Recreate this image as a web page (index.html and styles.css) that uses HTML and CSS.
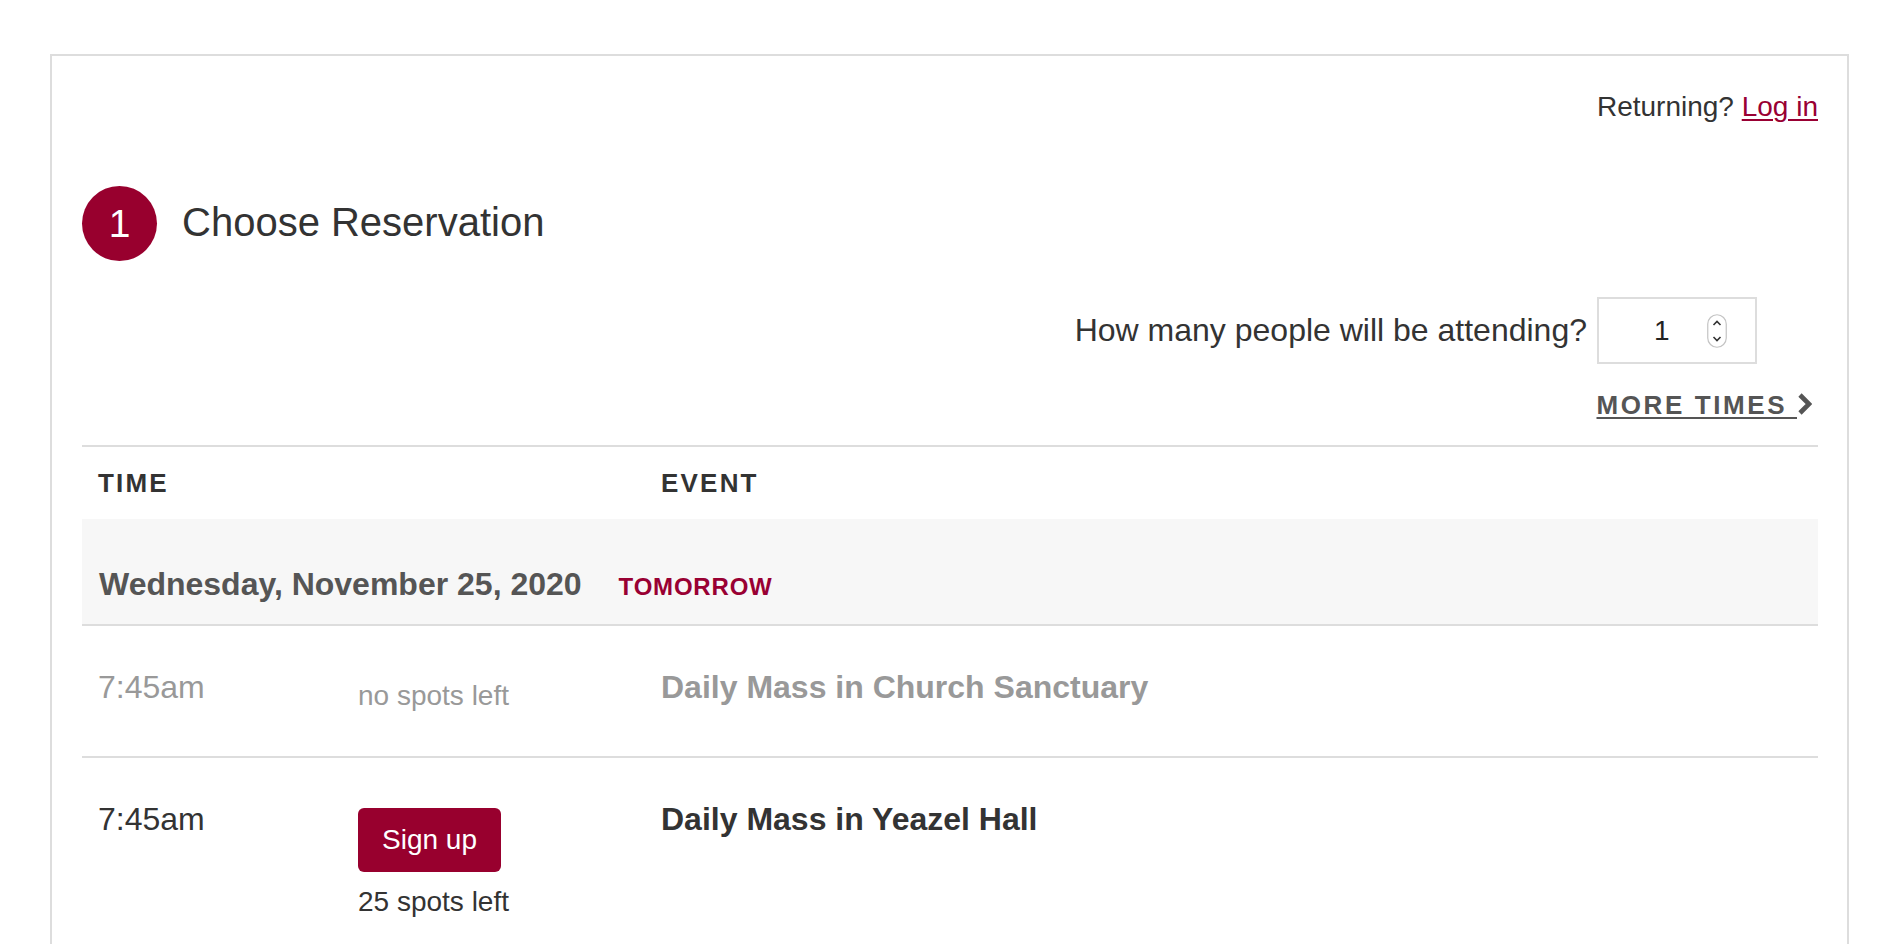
FILE: index.html
```html
<!DOCTYPE html>
<html lang="en">
<head>
<meta charset="utf-8">
<title>Choose Reservation</title>
<link rel="stylesheet" href="styles.css">
</head>
<body>
<div class="page">
  <div class="card">
    <div class="returning">Returning? <a href="#" class="login">Log in</a></div>

    <div class="step">
      <span class="step-num">1</span>
      <h2 class="step-title">Choose Reservation</h2>
    </div>

    <div class="attend">
      <label class="attend-label">How many people will be attending?</label>
      <div class="qty">
        <span class="qty-value">1</span>
        <svg class="spinner" width="20" height="34" viewBox="0 0 20 34">
          <rect x="0.75" y="0.75" width="18.5" height="32.5" rx="9.25" ry="9.25" fill="#fff" stroke="#c4c4c4" stroke-width="1.2"/>
          <polyline points="6.5,11 10,7.5 13.5,11" fill="none" stroke="#333" stroke-width="1.6"/>
          <polyline points="6.5,23 10,26.5 13.5,23" fill="none" stroke="#333" stroke-width="1.6"/>
        </svg>
      </div>
    </div>

    <div class="more">
      <a href="#" class="more-link">MORE TIMES </a><svg class="chev" width="15" height="22" viewBox="0 0 15 22"><polyline points="3,2 12,11 3,20" fill="none" stroke="#555" stroke-width="4.6"/></svg>
    </div>

    <div class="table">
      <div class="thead">
        <div class="th">TIME</div>
        <div class="th"></div>
        <div class="th">EVENT</div>
      </div>

      <div class="date-row">
        <span class="date">Wednesday, November 25, 2020</span>
        <span class="tomorrow">TOMORROW</span>
      </div>

      <div class="row row-disabled">
        <div class="time">7:45am</div>
        <div class="spots-cell">
          <div class="spots">no spots left</div>
        </div>
        <div class="title">Daily Mass in Church Sanctuary</div>
      </div>

      <div class="row">
        <div class="time">7:45am</div>
        <div class="spots-cell">
          <button class="signup" type="button">Sign up</button>
          <div class="spots spots-after">25 spots left</div>
        </div>
        <div class="title">Daily Mass in Yeazel Hall</div>
      </div>
    </div>
  </div>
</div>
</body>
</html>
```

FILE: styles.css
```css
html, body {
  margin: 0;
  padding: 0;
  background: #fff;
  overflow: hidden;
}

body {
  font-family: "Liberation Sans", Arial, Helvetica, sans-serif;
  color: #333;
}

.page {
  padding: 54px 51px 0 50px;
}

.card {
  border: 2px solid #ddd;
  padding: 31px 29px 40px 30px;
}

.returning {
  text-align: right;
  font-size: 28px;
  line-height: 40px;
  color: #333;
}

.login {
  color: #990033;
  text-decoration: underline;
  text-underline-offset: 3px;
  text-decoration-thickness: 2px;
}

.step {
  margin-top: 59px;
  display: flex;
  align-items: center;
  gap: 25px;
}

.step-num {
  width: 75px;
  height: 75px;
  border-radius: 50%;
  background: #98002e;
  color: #fff;
  font-size: 39px;
  line-height: 75px;
  text-align: center;
  flex: none;
}

.step-title {
  margin: 0 0 3px 0;
  font-size: 40px;
  line-height: 46px;
  font-weight: normal;
  color: #333;
}

.attend {
  margin-top: 36px;
  display: flex;
  justify-content: flex-end;
  align-items: center;
  gap: 10px;
  padding-right: 61px;
}

.attend-label {
  font-size: 32px;
  line-height: 45px;
  color: #333;
}

.qty {
  box-sizing: border-box;
  width: 160px;
  height: 67px;
  border: 2px solid #ddd;
  display: flex;
  align-items: center;
  padding: 0 28px 0 55px;
}

.qty-value {
  font-size: 28px;
  line-height: 40px;
  color: #222;
}

.spinner {
  margin-left: auto;
  display: block;
}

.more {
  margin-top: 21px;
  display: flex;
  justify-content: flex-end;
  align-items: center;
  padding-right: 6px;
  line-height: 40px;
}

.more-link {
  font-size: 26px;
  font-weight: bold;
  letter-spacing: 2.6px;
  color: #555;
  text-decoration: underline;
  text-decoration-thickness: 2px;
  text-underline-offset: 3px;
  white-space: pre;
}

.chev {
  display: block;
  margin-top: -2px;
}

.table {
  margin-top: 20px;
  border-top: 2px solid #ddd;
}

.thead,
.row {
  display: grid;
  grid-template-columns: 260px 303px 1fr;
  padding-left: 16px;
}

.thead {
  padding-top: 16px;
  padding-bottom: 16px;
}

.th {
  font-size: 26px;
  line-height: 40px;
  font-weight: bold;
  letter-spacing: 2.2px;
  color: #333;
}

.date-row {
  background: #f7f7f7;
  border-bottom: 2px solid #ddd;
  padding: 43px 16px 17px 17px;
  display: flex;
  align-items: baseline;
}

.date {
  font-size: 32px;
  line-height: 45px;
  font-weight: bold;
  color: #555;
}

.tomorrow {
  margin-left: 37px;
  font-size: 24px;
  font-weight: bold;
  letter-spacing: 0.8px;
  color: #990033;
}

.row {
  padding-top: 39px;
  padding-bottom: 40px;
  border-bottom: 2px solid #ddd;
}

.time {
  font-size: 32px;
  line-height: 45px;
  color: #333;
}

.title {
  font-size: 32px;
  line-height: 45px;
  font-weight: bold;
  color: #333;
}

.spots-cell {
  padding-top: 11px;
  display: flex;
  flex-direction: column;
  align-items: flex-start;
}

.spots {
  font-size: 28px;
  line-height: 40px;
  color: #333;
}

.spots-after {
  margin-top: 10px;
}

.signup {
  font-family: "Liberation Sans", Arial, Helvetica, sans-serif;
  font-size: 28px;
  line-height: 40px;
  padding: 12px 24px;
  border: none;
  border-radius: 6px;
  background: #98002e;
  color: #fff;
  cursor: pointer;
}

.row-disabled .time,
.row-disabled .title,
.row-disabled .spots {
  color: #999;
}
```
